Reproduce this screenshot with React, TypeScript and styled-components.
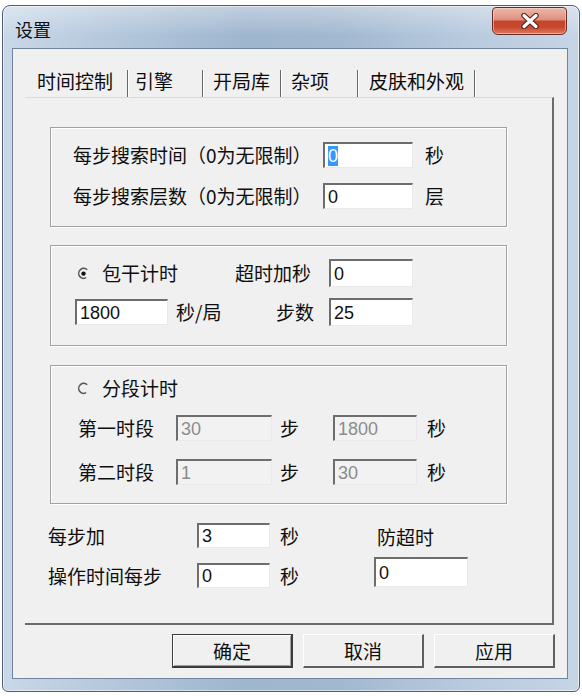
import React from "react";
import styled, { createGlobalStyle } from "styled-components";

const GlobalStyle = createGlobalStyle`
  html, body { margin: 0; padding: 0; background: #ffffff; }
  body { font-family: "Noto Sans CJK SC", "Noto Sans", sans-serif; }
  * { box-sizing: border-box; }
`;

const Page = styled.div`
  width: 582px;
  height: 696px;
  padding: 5px 0 0 2px;
`;

const Window = styled.div`
  width: 578px;
  height: 687px;
  display: flex;
  flex-direction: column;
  border: 1px solid #4f5e70;
  border-radius: 8px 8px 6px 6px;
  padding: 0 11px 12px 9px;
  background:
    linear-gradient(180deg, rgba(255,255,255,0.35) 0px, rgba(255,255,255,0) 30px),
    linear-gradient(90deg, #c9d8e8 0%, #b5c8dc 18%, #9fb6cf 42%, #a2b8d0 58%, #b9cbdf 82%, #c6d5e6 100%);
  box-shadow: inset 0 0 0 1px rgba(255, 255, 255, 0.55);
`;

const TitleBar = styled.div`
  height: 42px;
  display: flex;
  justify-content: space-between;
  align-items: flex-start;
  flex-shrink: 0;
`;

const TitleText = styled.div`
  margin: 12px 0 0 3px;
  font-size: 18px;
  line-height: 22px;
  color: #111111;
`;

const CloseButton = styled.div`
  margin: 1px 1px 0 0;
  width: 75px;
  height: 28px;
  display: flex;
  align-items: center;
  justify-content: center;
  border: 1px solid #6a2b22;
  border-radius: 4px 4px 6px 6px;
  background: linear-gradient(
    180deg,
    #ecb7aa 0%,
    #de917f 44%,
    #c6432b 52%,
    #c84a31 75%,
    #e07a5e 100%
  );
  box-shadow: inset 0 0 0 1px rgba(255, 220, 210, 0.55);
`;

const Client = styled.div`
  flex: 1;
  display: flex;
  flex-direction: column;
  border: 1px solid #71869d;
  background: #f0f0f0;
`;

const TabRow = styled.div`
  display: flex;
  align-items: flex-end;
  padding: 21px 0 0 16px;
  height: 48px;
  flex-shrink: 0;
`;

const Tab = styled.div<{ $w: number; $pad: number }>`
  width: ${(p) => p.$w}px;
  height: 27px;
  padding-left: ${(p) => p.$pad}px;
  font-size: 19px;
  line-height: 22px;
  color: #0c0c0c;
  white-space: nowrap;
  border-right: 1px solid #686868;
  box-shadow: 1px 0 0 #ffffff;
`;

const Panel = styled.div`
  margin-left: 12px;
  width: 529px;
  height: 528px;
  flex-shrink: 0;
  border-top: 1px solid #dadada;
  border-right: 2px solid #6c6c6c;
  border-bottom: 2px solid #6c6c6c;
  padding: 29px 0 0 25px;
  display: flex;
  flex-direction: column;
`;

const Group = styled.div<{ $mt: number; $h: number; $pt: number }>`
  width: 457px;
  height: ${(p) => p.$h}px;
  margin-top: ${(p) => p.$mt}px;
  padding: ${(p) => p.$pt}px 0 0 24px;
  border: 1px solid #a2a2a2;
  box-shadow: 1px 1px 0 #ffffff, inset 1px 1px 0 #ffffff;
  display: flex;
  flex-direction: column;
`;

const SearchGrid = styled.div`
  display: grid;
  grid-template-columns: 236px 90px auto;
  grid-auto-rows: 26px;
  row-gap: 15px;
  column-gap: 12px;
  align-items: center;
`;

const Row = styled.div<{ $mt?: number; $h: number }>`
  display: flex;
  align-items: center;
  height: ${(p) => p.$h}px;
  margin-top: ${(p) => p.$mt ?? 0}px;
`;

const Label = styled.div<{ $w?: number; $pl?: number; $ml?: number }>`
  ${(p) => (p.$w ? `width: ${p.$w}px; flex-shrink: 0;` : "")}
  padding-left: ${(p) => p.$pl ?? 0}px;
  margin-left: ${(p) => p.$ml ?? 0}px;
  font-size: 19px;
  line-height: 24px;
  color: #0e0e0e;
  white-space: nowrap;
`;

const Field = styled.div<{ $w: number; $h?: number; $mt?: number; $disabled?: boolean }>`
  width: ${(p) => p.$w}px;
  height: ${(p) => p.$h ?? 26}px;
  margin-top: ${(p) => p.$mt ?? 0}px;
  flex-shrink: 0;
  display: flex;
  align-items: center;
  padding-left: 3px;
  border-style: solid;
  border-width: 2px 1px 1px 2px;
  border-color: #6d6d6d #e9e9e9 #e9e9e9 #6d6d6d;
  background: ${(p) => (p.$disabled ? "#f2f2f2" : "#ffffff")};
  color: ${(p) => (p.$disabled ? "#8c8c8c" : "#111111")};
  font-family: "Liberation Sans", Arial, sans-serif;
  font-size: 18px;
  line-height: 20px;
`;

const Selected = styled.span`
  background: #3399ff;
  color: #ffffff;
  line-height: 20px;
`;

const RadioOption = styled.div<{ $w: number }>`
  width: ${(p) => p.$w}px;
  flex-shrink: 0;
  display: flex;
  align-items: center;
  gap: 12px;
  margin-left: 2px;
  font-size: 19px;
  line-height: 24px;
  color: #0e0e0e;
  white-space: nowrap;
`;

const BottomSection = styled.div`
  margin: 19px 0 0 -2px;
  display: flex;
  align-items: flex-start;
`;

const BottomGrid = styled.div`
  display: grid;
  grid-template-columns: 149px 73px 30px;
  grid-auto-rows: 25px;
  row-gap: 15px;
  column-gap: 0;
  align-items: center;
`;

const Unit = styled.div<{ $ml?: number }>`
  margin-left: ${(p) => p.$ml ?? 0}px;
  font-size: 19px;
  line-height: 24px;
  color: #0e0e0e;
  white-space: nowrap;
`;

const SideColumn = styled.div`
  margin-left: 74px;
  display: flex;
  flex-direction: column;
`;

const SideLabel = styled.div`
  height: 25px;
  padding: 2px 0 0 3px;
  font-size: 19px;
  line-height: 24px;
  color: #0e0e0e;
`;

const ButtonRow = styled.div`
  display: flex;
  justify-content: flex-end;
  gap: 10px;
  margin-top: 9px;
  padding-right: 12px;
`;

const Button = styled.div<{ $default?: boolean }>`
  width: 121px;
  height: 34px;
  display: flex;
  align-items: center;
  justify-content: center;
  font-size: 19px;
  color: #0e0e0e;
  background: #f0f0f0;
  border-style: solid;
  border-width: 1px 2px 2px 1px;
  border-color: #ffffff #5f5f5f #5f5f5f #ffffff;
  ${(p) =>
    p.$default
      ? "border-color: #3c3c3c; box-shadow: inset 1px 1px 0 #ffffff, inset -1px -1px 0 #a0a0a0;"
      : ""}
`;

const RadioIcon: React.FC<{ checked?: boolean }> = ({ checked }) => (
  <svg width="13" height="13" viewBox="0 0 13 13">
    <path
      d="M10.2 2.8 A5 5 0 1 0 9.2 10.7"
      fill="none"
      stroke="#555555"
      strokeWidth="1.5"
    />
    {checked && <circle cx="6.5" cy="6.6" r="2.2" fill="#111111" />}
  </svg>
);

const CloseGlyph: React.FC = () => (
  <svg width="20" height="16" viewBox="0 0 20 16">
    <path d="M4 2.5 L16 13.5 M16 2.5 L4 13.5" stroke="#5a2018" strokeWidth="5.4" strokeLinecap="round" />
    <path d="M4 2.5 L16 13.5 M16 2.5 L4 13.5" stroke="#ffffff" strokeWidth="3.2" strokeLinecap="round" />
  </svg>
);

const tabs: { label: string; w: number; pad: number }[] = [
  { label: "时间控制", w: 99, pad: 8 },
  { label: "引擎", w: 75, pad: 7 },
  { label: "开局库", w: 78, pad: 10 },
  { label: "杂项", w: 77, pad: 10 },
  { label: "皮肤和外观", w: 117, pad: 11 },
];

export default function App() {
  return (
    <>
      <GlobalStyle />
      <Page>
        <Window>
          <TitleBar>
            <TitleText>设置</TitleText>
            <CloseButton>
              <CloseGlyph />
            </CloseButton>
          </TitleBar>
          <Client>
            <TabRow>
              {tabs.map((t) => (
                <Tab key={t.label} $w={t.w} $pad={t.pad}>
                  {t.label}
                </Tab>
              ))}
            </TabRow>
            <Panel>
              <Group $mt={0} $h={100} $pt={14}>
                <SearchGrid>
                  <Label $ml={-2}>每步搜索时间（0为无限制）</Label>
                  <Field $w={90}>
                    <Selected>0</Selected>
                  </Field>
                  <Unit>秒</Unit>
                  <Label $ml={-2}>每步搜索层数（0为无限制）</Label>
                  <Field $w={90}>0</Field>
                  <Unit>层</Unit>
                </SearchGrid>
              </Group>

              <Group $mt={18} $h={101} $pt={13}>
                <Row $h={28}>
                  <RadioOption $w={158}>
                    <RadioIcon checked />
                    包干计时
                  </RadioOption>
                  <Label $w={94}>超时加秒</Label>
                  <Field $w={84} $h={28}>0</Field>
                </Row>
                <Row $h={28} $mt={11}>
                  <Field $w={93}>1800</Field>
                  <Label $w={108} $pl={8}>秒/局</Label>
                  <Label $w={53}>步数</Label>
                  <Field $w={84} $h={28}>25</Field>
                </Row>
              </Group>

              <Group $mt={19} $h={139} $pt={10}>
                <Row $h={24}>
                  <RadioOption $w={160}>
                    <RadioIcon />
                    分段计时
                  </RadioOption>
                </Row>
                <Row $h={26} $mt={15}>
                  <Label $w={101} $pl={3}>第一时段</Label>
                  <Field $w={96} $disabled>30</Field>
                  <Label $w={61} $pl={8}>步</Label>
                  <Field $w={84} $disabled>1800</Field>
                  <Unit $ml={10}>秒</Unit>
                </Row>
                <Row $h={26} $mt={18}>
                  <Label $w={101} $pl={3}>第二时段</Label>
                  <Field $w={96} $disabled>1</Field>
                  <Label $w={61} $pl={8}>步</Label>
                  <Field $w={84} $disabled>30</Field>
                  <Unit $ml={10}>秒</Unit>
                </Row>
              </Group>

              <BottomSection>
                <BottomGrid>
                  <Label>每步加</Label>
                  <Field $w={73} $h={25}>3</Field>
                  <Unit $ml={10}>秒</Unit>
                  <Label>操作时间每步</Label>
                  <Field $w={73} $h={25}>0</Field>
                  <Unit $ml={10}>秒</Unit>
                </BottomGrid>
                <SideColumn>
                  <SideLabel>防超时</SideLabel>
                  <Field $w={94} $h={30} $mt={9}>0</Field>
                </SideColumn>
              </BottomSection>
            </Panel>
            <ButtonRow>
              <Button $default>确定</Button>
              <Button>取消</Button>
              <Button>应用</Button>
            </ButtonRow>
          </Client>
        </Window>
      </Page>
    </>
  );
}
